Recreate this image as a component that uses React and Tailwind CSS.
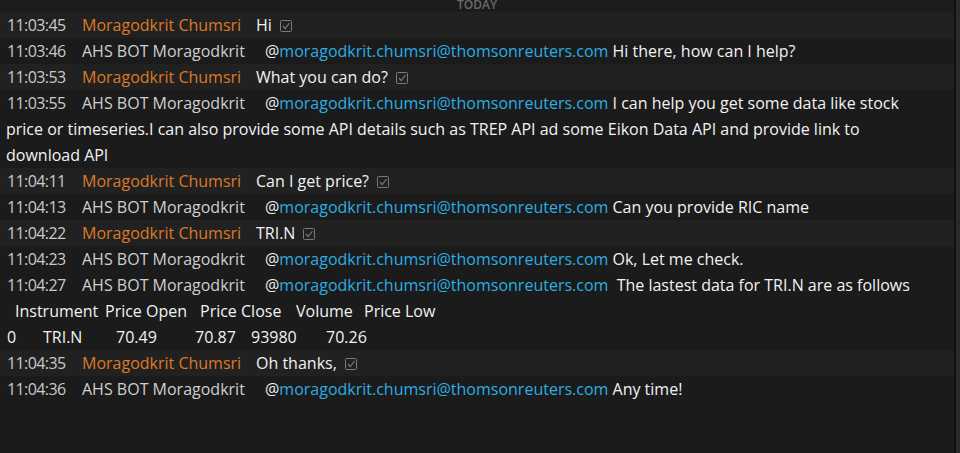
import React from 'react';

const EMAIL = 'moragodkrit.chumsri@thomsonreuters.com';

const messages = [
  { time: '11:03:45', user: true, text: 'Hi' },
  { time: '11:03:46', text: 'Hi there, how can I help?' },
  { time: '11:03:53', user: true, text: 'What you can do?' },
  {
    time: '11:03:55',
    text: 'I can help you get some data like stock price or timeseries.I can also provide some API details such as TREP API ad some Eikon Data API and provide link to download API',
  },
  { time: '11:04:11', user: true, text: 'Can I get price?' },
  { time: '11:04:13', text: 'Can you provide RIC name' },
  { time: '11:04:22', user: true, text: 'TRI.N' },
  { time: '11:04:23', text: 'Ok, Let me check.' },
  { time: '11:04:27', text: ' The lastest data for TRI.N are as follows', table: true },
  { time: '11:04:35', user: true, text: 'Oh thanks,' },
  { time: '11:04:36', text: 'Any time!' },
];

function ReadMark() {
  return (
    <svg width="12" height="12" viewBox="0 0 12 12" className="inline-block ml-[8px] align-[-1px]" fill="none" stroke="#7a7a7a" strokeWidth="1">
      <rect x="0.5" y="0.5" width="11" height="11" rx="1" />
      <polyline points="3,6 5.2,8.6 9.5,3" strokeWidth="1.2" />
    </svg>
  );
}

function PriceTable() {
  return (
    <div>
      <div className="flex">
        <span className="ml-[9px] w-[90px]">Instrument</span>
        <span className="w-[95px]">Price Open</span>
        <span className="w-[96px]">Price Close</span>
        <span className="w-[68px]">Volume</span>
        <span>Price Low</span>
      </div>
      <div className="flex">
        <span className="ml-[1px] w-[36px]">0</span>
        <span className="w-[73px]">TRI.N</span>
        <span className="w-[79px]">70.49</span>
        <span className="w-[56px]">70.87</span>
        <span className="w-[75px]">93980</span>
        <span>70.26</span>
      </div>
    </div>
  );
}

function Row({ m }) {
  return (
    <div className={`pl-[6px] pr-[24px] ${m.user ? 'bg-[#212121]' : 'bg-[#1b1b1b]'}`}>
      <span className="inline-block w-[76px] pl-[1px] tracking-[-0.6px] text-[#c9c9c9]">{m.time}</span>
      {m.user ? (
        <span className="inline-block w-[174px] text-[#dc7a27]">Moragodkrit Chumsri</span>
      ) : (
        <span className="inline-block w-[183px] text-[#cfcfcf]">AHS BOT Moragodkrit</span>
      )}
      {!m.user && (
        <>
          <span className="text-[#ececec]">@</span>
          <span className="text-[#2aaee3]">{EMAIL}</span>{' '}
        </>
      )}
      <span className="text-[#f2f2f2] whitespace-pre-wrap">{m.text}</span>
      {m.user && <ReadMark />}
      {m.table && <div className="text-[#f2f2f2]"><PriceTable /></div>}
    </div>
  );
}

export default function App() {
  return (
    <div className="flex h-[453px] w-[960px] overflow-hidden bg-[#1b1b1b]" style={{ fontFamily: '"Open Sans", sans-serif' }}>
      <div className="flex-1 min-w-0">
        {/* day divider */}
        <div className="h-[12px] bg-[#1c1c1c] text-center text-[12px] font-semibold leading-[10px] text-[#6a6a6a] overflow-hidden">
          TODAY
        </div>
        <div className="text-[16px] leading-[26px]">
          {messages.map(m => (
            <Row key={m.time} m={m} />
          ))}
        </div>
      </div>
      <div className="w-[2px] bg-[#111111]" />
      <div className="w-[4px] bg-[#2a2a2a]" />
    </div>
  );
}
